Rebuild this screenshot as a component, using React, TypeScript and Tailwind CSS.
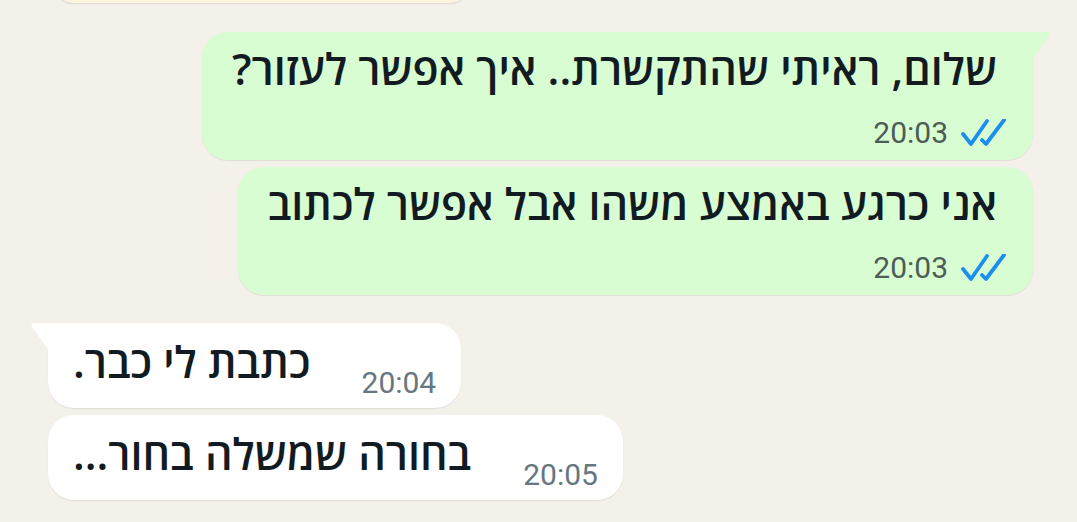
import React from "react";

const hebFont = { fontFamily: '"Open Sans", "DejaVu Sans", "Liberation Sans", sans-serif' };

function Checks() {
  return (
    <svg width="46" height="28" viewBox="0 0 46 28" className="shrink-0">
      <polyline points="2,15 10,25 26,2" fill="none" stroke="#1b8ef0" strokeWidth="3.8" strokeLinecap="round" strokeLinejoin="round" />
      <polyline points="21,21 25,25 43,1" fill="none" stroke="#1b8ef0" strokeWidth="3.8" strokeLinecap="round" strokeLinejoin="round" />
    </svg>
  );
}

function OutBubble({ text, time, tail }: { text: string; time: string; tail?: boolean }) {
  return (
    <div className="relative mr-[44px]">
      {tail && (
        <svg className="absolute right-[-20px] top-0" width="24" height="26" viewBox="0 0 24 26">
          <path d="M0,0 L18,0 Q22,0 20,4 L4,26 L0,26 Z" fill="#d9fdd3" />
        </svg>
      )}
      <div
        className={`bg-[#d9fdd3] h-[128px] pl-[30px] pr-[26px] pt-[9px] flex flex-col items-end shadow-[0_1px_1px_rgba(0,0,0,0.08)] ${
          tail ? "rounded-[26px] rounded-tr-none" : "rounded-[26px]"
        }`}
      >
        <div dir="rtl" className="text-[43px] leading-[56px] mr-[10px] text-[#111b21] font-semibold" style={hebFont}>
          {text}
        </div>
        <div className="flex items-center gap-[13px] mt-[19px]">
          <span className="text-[30px] leading-[34px] text-[#4b5d55]" style={{ fontFamily: "Roboto, sans-serif" }}>
            {time}
          </span>
          <Checks />
        </div>
      </div>
    </div>
  );
}

function InBubble({ text, time, tail, gap }: { text: string; time: string; tail?: boolean; gap: string }) {
  return (
    <div className="relative ml-[48px]">
      {tail && (
        <svg className="absolute left-[-20px] top-0" width="24" height="26" viewBox="0 0 24 26">
          <path d="M24,0 L6,0 Q2,0 4,4 L20,26 L24,26 Z" fill="#ffffff" />
        </svg>
      )}
      <div
        className={`bg-white h-[85px] pl-[25px] pr-[25px] flex items-start shadow-[0_1px_1px_rgba(0,0,0,0.08)] ${
          tail ? "rounded-[26px] rounded-tl-none" : "rounded-[26px]"
        } ${gap}`}
      >
        <div dir="rtl" className="text-[43px] leading-[56px] mt-[11px] text-[#111b21] font-semibold" style={hebFont}>
          {text}
        </div>
        <span className="text-[30px] leading-[34px] mt-[43px] text-[#667781]" style={{ fontFamily: "Roboto, sans-serif" }}>
          {time}
        </span>
      </div>
    </div>
  );
}

export default function App() {
  return (
    <div className="w-[1077px] h-[522px] bg-[#f4f0ea] overflow-hidden relative">
      <div className="ml-[58px] w-[407px] h-[43px] -mt-[40px] rounded-[14px] bg-[#fdf4dd] shadow-[0_1px_2px_rgba(0,0,0,0.1)]" />
      <div className="flex flex-col items-end mt-[29px] gap-[7px]">
        <OutBubble text="שלום, ראיתי שהתקשרת.. איך אפשר לעזור?" time="20:03" tail />
        <OutBubble text="אני כרגע באמצע משהו אבל אפשר לכתוב" time="20:03" />
      </div>
      <div className="flex flex-col items-start mt-[28px] gap-[7px]">
        <InBubble text="כתבת לי כבר." time="20:04" tail gap="gap-[51px]" />
        <InBubble text="בחורה שמשלה בחור..." time="20:05" gap="gap-[52px]" />
      </div>
    </div>
  );
}
